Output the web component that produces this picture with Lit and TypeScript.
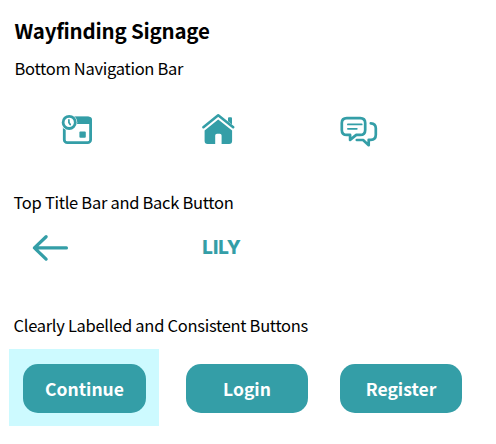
import { LitElement, html, css } from "lit";
import { customElement } from "lit/decorators.js";

@customElement("app-root")
export class AppRoot extends LitElement {
  static styles = css`
    :host {
      display: block;
      box-sizing: border-box;
      width: 496px;
      height: 444px;
      padding-top: 18px;
      overflow: hidden;
      background: #fff;
      color: #000;
      font-family: "Noto Sans CJK SC", "Noto Sans", sans-serif;
    }
    h1, h2 { margin: 0; line-height: 24px; white-space: nowrap; }
    h1 { padding-left: 14.5px; font-size: 20.5px; font-weight: 700; letter-spacing: -0.22px; }
    h2 { padding-left: 13.5px; font-size: 16.5px; font-weight: 400; letter-spacing: -0.29px; }
    .nav-title { margin-top: 14px; padding-left: 14.5px; }
    .row { display: flex; align-items: center; }
    .nav { height: 50px; margin-top: 25px; padding-left: 50px; gap: 80px; }
    .nav-gap { margin-top: 35px; }
    .top { height: 45px; margin-top: 11px; padding-left: 20px; }
    .top-gap { margin-top: 43px; }
    svg { display: block; flex: none; }
    .solid { fill: #349ea7; }
    .line { fill: none; stroke: #349ea7; stroke-linecap: round; stroke-linejoin: round; }
    .paper { fill: #fff; }
    .brand {
      margin-left: 122.3px;
      color: #349ea7;
      font-family: Inter, sans-serif;
      font-size: 18.8px;
      font-weight: 850;
      line-height: 24px;
      letter-spacing: 0;
    }
    .buttons { align-items: flex-start; margin-top: 12px; padding-left: 9px; }
    .highlight { padding: 15px 13px 13px 14px; background: #cdfaff; }
    button {
      display: block;
      box-sizing: border-box;
      width: 122px;
      height: 49px;
      padding: 0;
      border: 0;
      border-radius: 15px;
      background: #349ea7;
      color: #fff;
      font: 700 17.5px/48px "Noto Sans CJK SC", "Noto Sans", sans-serif;
    }
    .highlight button { width: 123px; line-height: 49px; }
    .login { margin: 15px 32px 0 27px; }
    .register { margin-top: 15px; }
  `;

  render() {
    return html`
      <h1>Wayfinding Signage</h1>
      <h2 class="nav-title">Bottom Navigation Bar</h2>
      <div class="row nav">
        <svg width="60" height="50" viewBox="0 0 60 50" aria-label="Appointments">
          <rect class="line" x="14.3" y="13" width="26.3" height="24.7" rx="3" stroke-width="2.8" />
          <path class="solid" d="M14 19V15q0-3.3 3.3-3.3h21.4q3.3 0 3.3 3.3v4z" />
          <rect class="solid" x="29.4" y="26.4" width="6.4" height="6.4" rx="1" />
          <circle class="paper" cx="19.2" cy="17.4" r="8.1" />
          <circle class="line" cx="19.2" cy="17.4" r="6.1" stroke-width="2.8" />
          <path class="line" d="M18.9 14.9v2.6l1.3 2" stroke-width="1.7" />
        </svg>
        <svg width="60" height="50" viewBox="0 0 60 50" aria-label="Home">
          <path class="line" d="M13.4 22.2 28.2 10.3 43.2 22.2" stroke-width="2.6" />
          <path class="solid" d="M38 13.2q0-1 1-1h2q1 0 1 1v6.2l-4-3.2z" />
          <path class="solid" d="M28.2 14.5 42.1 25.4V36q0 3-3 3H31.6V30.5q0-1.8-1.8-1.8h-2.8q-1.8 0-1.8 1.8V39H17.6q-3 0-3-3V25.4z" />
        </svg>
        <svg width="60" height="50" viewBox="0 0 60 50" aria-label="Messages">
          <path class="line" d="M16.8 13.1h13.4q5 0 5 5v6.8q0 5-5 5h-3.9l-6.2 5v-5h-3.3q-5 0-5-5v-6.8q0-5 5-5z" stroke-width="2.7" />
          <path class="line" d="M17.9 19.4h13.8M17.9 23.8h8.9" stroke-width="1.8" />
          <path class="line" d="M40.8 18.3q5 .2 5 5v6.5q0 5-5 5h-2.1v5.4L33.1 35h-6.3" stroke-width="2.7" />
        </svg>
      </div>
      <h2 class="nav-gap">Top Title Bar and Back Button</h2>
      <div class="row top">
        <svg width="60" height="45" viewBox="0 0 60 45" aria-label="Back">
          <path class="line" d="M46.4 22.9H14.6M26.1 11.7 14.4 22.9 26.1 34.1" stroke-width="3.3" />
        </svg>
        <span class="brand">LILY</span>
      </div>
      <h2 class="top-gap">Clearly Labelled and Consistent Buttons</h2>
      <div class="row buttons">
        <div class="highlight"><button>Continue</button></div>
        <button class="login">Login</button>
        <button class="register">Register</button>
      </div>
    `;
  }
}
